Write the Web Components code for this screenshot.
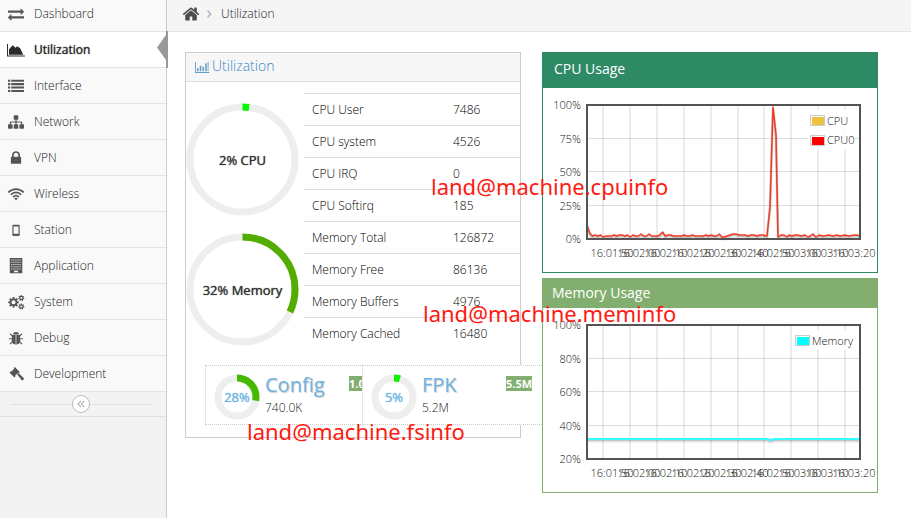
<!DOCTYPE html>
<html lang="en">
<head>
<meta charset="utf-8">
<title>Utilization</title>
<style>
  body { margin: 0; font: 300 12px/20px "Open Sans", "Noto Sans", sans-serif; color: #000; background: #fff; }
</style>
</head>
<body>
<router-console></router-console>

<script>
const define = (name, html) => {
  const template = document.createElement('template');
  customElements.define(name, class extends HTMLElement {
    connectedCallback() {
      if (this.shadowRoot) return;
      template.innerHTML = typeof html === 'function' ? html(this) : html;
      this.attachShadow({ mode: 'open' }).append(template.content.cloneNode(true));
    }
  });
};

const tooth = (cx, cy, r, w, h, n) => Array.from({ length: n }, (_, i) =>
  `<rect x="${cx - w / 2}" y="${cy - r - h}" width="${w}" height="${h + 60}" transform="rotate(${i * 360 / n} ${cx} ${cy})"/>`).join('');
const cog = (cx, cy, r, hole, n) =>
  `<circle cx="${cx}" cy="${cy}" r="${(r + hole) / 2}" fill="none" stroke="currentColor" stroke-width="${r - hole}"/>${tooth(cx, cy, r, r * .52, r * .36, n)}`;

const ICONS = {
  exchange: '<path d="M1792 1184v192q0 13-9.5 22.5t-22.5 9.5h-1376v192q0 13-9.5 22.5t-22.5 9.5q-12 0-24-10l-319-320q-9-9-9-22 0-14 9-23l320-320q9-9 23-9 13 0 22.5 9.5t9.5 22.5v192h1376q13 0 22.5 9.5t9.5 22.5zm0-544q0 14-9 23l-320 320q-9 9-23 9-13 0-22.5-9.5t-9.5-22.5v-192h-1376q-13 0-22.5-9.5t-9.5-22.5v-192q0-13 9.5-22.5t22.5-9.5h1376v-192q0-14 9-23t23-9q12 0 24 10l319 319q9 9 9 23z"/>',
  area: '<path d="M-110 220h110v1300h1900v110H-110z"/><path d="M110 1430V850l400-480 330 280 180-170 340 210 350 740z"/>',
  list: [190, 570, 950, 1330].map(y => `<path d="M0 ${y}h250v230H0zM360 ${y}h1432v230H360z"/>`).join(''),
  sitemap: '<path d="M1792 1248v320q0 40-28 68t-68 28h-320q-40 0-68-28t-28-68v-320q0-40 28-68t68-28h96v-192h-512v192h96q40 0 68 28t28 68v320q0 40-28 68t-68 28h-320q-40 0-68-28t-28-68v-320q0-40 28-68t68-28h96v-192h-512v192h96q40 0 68 28t28 68v320q0 40-28 68t-68 28h-320q-40 0-68-28t-28-68v-320q0-40 28-68t68-28h96v-192q0-52 38-90t90-38h512v-192h-96q-40 0-68-28t-28-68v-320q0-40 28-68t68-28h320q40 0 68 28t28 68v320q0 40-28 68t-68 28h-96v192h512q52 0 90 38t38 90v192h96q40 0 68 28t28 68z"/>',
  lock: '<path d="M640 768h512v-192q0-106-75-181t-181-75-181 75-75 181v192zm832 96v576q0 40-28 68t-68 28h-960q-40 0-68-28t-28-68v-576q0-40 28-68t68-28h32v-192q0-184 132-316t316-132 316 132 132 316v192h32q40 0 68 28t28 68z"/>',
  wifi: '<g fill="none" stroke="currentColor" stroke-width="190"><path d="M40 720Q400 350 896 350t856 370"/><path d="M310 980Q570 720 896 720t586 260"/><path d="M570 1240Q720 1080 896 1080t326 160"/></g><path d="M896 1600l-200-200q90-80 200-80t200 80z"/>',
  mobile: '<path fill-rule="evenodd" d="M610 300h580q120 0 120 120v1030q0 120-120 120H610q-120 0-120-120V420q0-120 120-120zm10 190v830h560V490z"/>',
  building: '<path fill-rule="evenodd" d="M200 0h1400v1720H200zM' + [170, 420, 670, 920, 1170].map(y => [370, 600, 830, 1060, 1290].map(x => `${x} ${y}h120v120h-120z`).join('M')).join('M') + 'M670 1440h460v150h-460z"/>',
  cogs: cog(620, 930, 430, 230, 8) + cog(1490, 450, 250, 120, 7) + cog(1490, 1400, 250, 120, 7),
  bug: '<path d="M560 500q0-290 336-290t336 290z"/><path d="M430 570h430v1050Q430 1600 430 1200zM932 570h430v630q0 400-430 420z"/><path fill="none" stroke="currentColor" stroke-width="120" d="M470 650L240 420M430 980H120M480 1300l-250 270M1322 650l230-230M1362 980h310M1312 1300l250 270"/>',
  gavel: '<path d="M760 120l560 560-110 110-70-40-350 350 40 70-110 110L160 720l110-110 70 40 350-350-40-70z"/><path d="M1010 930l160-140 580 560q70 80 0 160l-70 70q-80 60-160 0z"/>',
  home: '<path d="M1472 992v480q0 26-19 45t-45 19h-384v-384h-256v384h-384q-26 0-45-19t-19-45v-480q0-1 .5-3t.5-3l575-474 575 474q1 2 1 6zm223-69l-62 74q-8 9-21 11h-3q-13 0-21-7l-692-577-692 577q-12 8-24 7-13-2-21-11l-62-74q-8-10-7-23.5t11-21.5l719-599q32-26 76-26t76 26l244 204v-195q0-14 9-23t23-9h192q14 0 23 9t9 23v408l219 182q10 8 11 21.5t-7 23.5z"/>',
  bars: '<path d="M0 240h120v1290h1700v120H0zM260 1010h200v420H260zM610 720h200v710H610zM960 860h200v570H960zM1310 400h200v1030h-200z"/><path d="M1620 240h110v1190h-110z"/>',
  left: '<path fill="none" stroke="currentColor" stroke-width="190" d="M900 350L370 896l530 546M1480 350L950 896l530 546"/>',
  right: '<path fill="none" stroke="currentColor" stroke-width="330" d="M560 130l700 766-700 766"/>'
};

define('ui-icon', el => `
  <style>
    :host { display: inline-flex; flex: none; width: 16px; height: 16px; }
    svg { width: 100%; height: 100%; overflow: visible; fill: currentColor; }
  </style>
  <svg viewBox="0 0 1792 1792" aria-hidden="true">${ICONS[el.getAttribute('name')]}</svg>`);

define('nav-item', el => `
  <style>
    :host { display: block; position: relative; border-bottom: 1px solid #e5e5e5; background: #f9f9f9; color: #222; }
    a { display: flex; align-items: center; gap: 10px; height: 35px; padding-left: 8px; color: inherit; text-decoration: none; }
    ui-icon { margin-top: 1px; color: #555; }
    :host([first]) a { height: 31px; box-sizing: border-box; padding-bottom: 4px; }
    :host([active]) { background: #fff; color: #2b2b2b; }
    :host([active]) a { font-weight: 400; text-shadow: 0 0 1px; }
    :host([active]) ui-icon { color: #2b2b2b; }
    .mark { position: absolute; right: -2px; top: -1px; width: 11px; height: 37px; fill: #999; }
  </style>
  <a href="#${el.textContent.trim().toLowerCase()}"><ui-icon name="${el.getAttribute('icon')}"></ui-icon><span><slot></slot></span></a>
  ${el.hasAttribute('active') ? '<svg class="mark" viewBox="0 0 11 37"><path d="M9 0h2v37H9V29L0 16.500 9 4z"/></svg>' : ''}`);

define('side-bar', `
  <style>
    :host { display: block; flex: 0 0 166px; border-right: 1px solid #ccc; background: #f2f2f2; }
    .fold { display: flex; align-items: center; height: 24px; padding: 0 14px 0 10px; border-bottom: 1px solid #e0e0e0; background: #f3f3f3; }
    .fold::before, .fold::after { content: ""; flex: 1; height: 1px; background: #e0e0e0; }
    button { display: grid; place-items: center; width: 18px; height: 18px; padding: 0; border: 1px solid #bbb; border-radius: 50%; background: #fff; color: #aaa; }
    ui-icon { width: 10px; height: 10px; }
  </style>
  <nav><slot></slot></nav>
  <div class="fold"><button aria-label="Collapse menu"><ui-icon name="left"></ui-icon></button></div>`);

define('page-crumbs', `
  <style>
    :host { display: flex; align-items: center; height: 32px; box-sizing: border-box; padding: 0 15px 4px; border-bottom: 1px solid #e5e5e5; background: #f5f5f5; color: #222; }
    a { display: flex; color: #4c4c4c; }
    a ui-icon { width: 18px; height: 18px; }
    .sep { width: 8px; height: 8px; margin: 0 8px 0 5px; color: #b2b6bf; }
  </style>
  <a href="#home" aria-label="Home"><ui-icon name="home"></ui-icon></a>
  <ui-icon class="sep" name="right"></ui-icon><span><slot></slot></span>`);

/* Ring gauge with its caption in the middle. */
define('dial-gauge', el => {
  const size = +el.getAttribute('size'), v = +el.getAttribute('value'), r = size / 2 - 4;
  const len = 2 * Math.PI * r;
  return `
  <style>
    :host { display: grid; place-items: center; flex: none; width: ${size}px; height: ${size}px; font-size: 13px; font-weight: 400; text-shadow: 0 0 1px; }
    svg, span { grid-area: 1 / 1; }
    svg { width: 100%; height: 100%; }
    circle { fill: none; stroke-width: 7; }
  </style>
  <svg viewBox="0 0 ${size} ${size}" aria-hidden="true">
    <circle cx="${size / 2}" cy="${size / 2}" r="${r}" stroke="#eee"/>
    <circle cx="${size / 2}" cy="${size / 2}" r="${r}" stroke="${el.getAttribute('color')}" stroke-dasharray="${len * v / 100} ${len}" transform="rotate(-90 ${size / 2} ${size / 2})"/>
  </svg><span><slot></slot></span>`;
});

define('fs-card', el => `
  <style>
    :host { display: block; flex: 1; min-width: 0; overflow: var(--clip, visible); }
    .card { position: relative; display: flex; gap: 5px; width: 179px; height: 58px; border: 1px dotted #ccc; border-right: 0; background: #fff; }
    dial-gauge { margin: 8px 0 0 8px; color: #6fb3e0; }
    .name { padding-top: 7px; font-size: 20px; font-weight: 400; line-height: 24px; color: #6fb3e0; text-shadow: 1px 1px 1px #ccc; }
    .size { font-size: 12px; line-height: 22px; color: #222; }
    .badge { position: absolute; left: 143px; top: 10px; width: 26px; height: 15px; background: #82af6f; color: #fff; font-size: 11px; font-weight: 700; line-height: 15px; text-align: center; white-space: nowrap; }
  </style>
  <div class="card">
    <dial-gauge size="46" value="${el.getAttribute('value')}" color="${el.getAttribute('color')}">${el.getAttribute('value')}%</dial-gauge>
    <div><div class="name"><slot></slot></div><div class="size">${el.getAttribute('used')}</div></div>
    <span class="badge">${el.getAttribute('total')}</span>
  </div>`);

const STATS = [['CPU User', 7486], ['CPU system', 4526], ['CPU IRQ', 0], ['CPU Softirq', 185],
  ['Memory Total', 126872], ['Memory Free', 86136], ['Memory Buffers', 4976], ['Memory Cached', 16480]];

define('stats-widget', `
  <style>
    :host { display: block; min-width: 0; border: 1px solid #ccc; background: #fff; }
    h5 { display: flex; align-items: center; gap: 3px; height: 28px; margin: 0; padding-left: 9px; border-bottom: 1px solid #ddd; background: #f7f7f7; color: #3a87c4; font-size: 14px; font-weight: 300; }
    h5 ui-icon { width: 14px; height: 14px; color: #669fc7; }
    h5 span { padding-bottom: 2px; }
    .top { display: flex; justify-content: space-between; padding-top: 11px; }
    .dials { display: grid; gap: 17px; align-content: start; padding-top: 10px; color: #333; }
    table { width: 216px; border-collapse: collapse; }
    th, td { height: 30px; padding: 1px 0 0 8px; border-top: 1px solid #ddd; text-align: left; font-weight: 300; }
    th { width: 133px; }
    .fs { display: flex; padding: 16px 1px 12px 19px; }
    .first { --clip: hidden; }
  </style>
  <h5><ui-icon name="bars"></ui-icon><span>Utilization</span></h5>
  <div class="top">
    <div class="dials">
      <dial-gauge size="113" value="2" color="#05fa00">2% CPU</dial-gauge>
      <dial-gauge size="113" value="32" color="#52ad00">32% Memory</dial-gauge>
    </div>
    <table>${STATS.map(([k, v]) => `<tr><th scope="row">${k}</th><td>${v}</td></tr>`).join('')}</table>
  </div>
  <div class="fs">
    <fs-card class="first" value="28" color="#47b800" used="740.0K" total="1.0M">Config</fs-card>
    <fs-card value="5" color="#0df200" used="5.2M" total="5.5M">FPK</fs-card>
  </div>`);

define('usage-panel', `
  <style>
    :host { display: block; border: 1px solid var(--tone); background: #fff; position: relative; }
    h5 { margin: 0; padding: var(--pad); background: var(--tone); color: #fff; font-size: 14px; font-weight: 400; line-height: 20px; }
  </style>
  <h5><slot name="title"></slot></h5><slot></slot>`);

/* Samples are plot heights, one every 2.7 units, over a plot that spans 44..317 by 17..151. */
const idle = '137 145 148 147 148 147 149 148 148 148 147 148 147 147 148 147 149 147 148 148 146 148 148 146 148 148 148 147 144 148 147 147 148 148 148 148 147 148 148 147 148 148 148 148 147 148 147 148 148 146 149 147 148 147 148 147 147 149 148 146 149 147 148 147 147 147 148'.split(' ').map(Number);
const spike = [[181, 149], [184, 148], [187, 147], [190, 146], [193, 146], [196, 147], [202, 147], [205, 148], [208, 147], [211, 147], [214, 148], [217, 147], [220, 147], [224, 148], [227, 119], [230, 19], [233, 47], [235, 149], [238, 147], [241, 147], [244, 149], [246, 147], [249, 148], [252, 147], [255, 147], [258, 148], [262, 147], [265, 149], [267, 148], [270, 146], [273, 149], [276, 147], [280, 148], [286, 147], [290, 148], [294, 147], [297, 148], [302, 147], [306, 148], [311, 147], [314, 147], [317, 148]];
const cpu = idle.map((y, i) => [44 + i * 2.7, y]).filter(p => p[0] < 180).concat(spike);
const mem = [[44, 131], [224, 131], [227, 132], [232, 131], [317, 131]];
const CHARTS = {
  cpu: { y: [0, 25, 50, 75, 100], data: cpu, color: '#f43a24', legend: [['CPU', '#edc240'], ['CPU0', '#f00']], lx: 268 },
  memory: { y: [20, 40, 60, 80, 100], data: mem, color: '#3ff', legend: [['Memory', '#0ff']], lx: 253 }
};
const TIMES = ['16:01:50', '16:02:00', '16:02:10', '16:02:20', '16:02:30', '16:02:40', '16:02:50', '16:03:00', '16:03:10', '16:03:20'];

define('time-chart', el => {
  const c = CHARTS[el.getAttribute('kind')];
  const line = c.data.map(p => p.join(' ')).join('L');
  return `
  <style>
    :host { display: block; }
    svg { display: block; width: 100%; height: auto; font-size: 11px; fill: #111; }
    .grid { stroke: #545454; fill: none; }
    .line { fill: none; stroke-linejoin: round; }
  </style>
  <svg viewBox="0 0 334 184" role="img" aria-label="Usage over time">
    <path class="grid" stroke-width="2" stroke-opacity=".11" d="${TIMES.map((_, i) => `M${Math.round(60 + i * 26.9)} 17v134`).join('')}"/>
    <path class="grid" stroke-width="1" stroke-opacity=".2" d="M44 50.500h273M44 83.500h273M44 117.500h273"/>
    <path class="line" stroke="#000" stroke-opacity=".1" stroke-width="3" transform="translate(0 2)" d="M${line}"/>
    <path class="line" stroke="#000" stroke-opacity=".15" stroke-width="2" transform="translate(0 1)" d="M${line}"/>
    <path class="line" stroke="${c.color}" stroke-width="${c.lx === 268 ? 1.500 : 2}" d="M${line}"/>
    <rect x="44" y="17" width="273" height="134" fill="none" stroke="#545454" stroke-width="2"/>
    <rect x="${c.lx - 3}" y="22" width="${315 - c.lx}" height="${c.legend.length * 20}" fill="#fff" fill-opacity=".85"/>
    ${c.legend.map(([name, fill], i) => `
      <rect x="${c.lx - .5}" y="${27.5 + i * 20}" width="14" height="10" fill="#fff" stroke="#ccc"/>
      <rect x="${c.lx + 1}" y="${29 + i * 20}" width="12" height="8" fill="${fill}"/>
      <text x="${c.lx + 16}" y="${37 + i * 19}">${name}</text>`).join('')}
    ${c.y.map((v, i) => `<text x="38" y="${Math.round(155 - i * 33.4)}" text-anchor="end">${v}%</text>`).join('')}
    ${TIMES.map((t, i) => `<text x="${Math.round(69 + i * 26.9)}" y="169" text-anchor="middle">${t}</text>`).join('')}
  </svg>`;
});

/* Free-floating annotation pinned over the page. */
define('pin-note', el => `
  <style>
    :host { position: absolute; left: ${el.getAttribute('x')}px; top: ${el.getAttribute('y')}px; font: 400 22px/28px "Noto Sans", sans-serif; color: #ff1a10; white-space: nowrap; pointer-events: none; }
  </style><slot></slot>`);

define('router-console', `
  <style>
    :host { display: flex; position: relative; min-height: 100vh; }
    main { flex: 1; min-width: 0; }
    .content { display: grid; grid-template-columns: minmax(0, 1fr) minmax(0, 1fr); gap: 21px; align-items: start; padding: 20px 33px 25px 18px; }
    .charts { display: grid; gap: 5px; }
    .cpu { --tone: #2e8965; --pad: 6px 11px 9px; }
    .mem { --tone: #82af6f; --pad: 4px 9px 5px; }
  </style>
  <side-bar>
    <nav-item icon="exchange" first>Dashboard</nav-item>
    <nav-item icon="area" active>Utilization</nav-item>
    <nav-item icon="list">Interface</nav-item>
    <nav-item icon="sitemap">Network</nav-item>
    <nav-item icon="lock">VPN</nav-item>
    <nav-item icon="wifi">Wireless</nav-item>
    <nav-item icon="mobile">Station</nav-item>
    <nav-item icon="building">Application</nav-item>
    <nav-item icon="cogs">System</nav-item>
    <nav-item icon="bug">Debug</nav-item>
    <nav-item icon="gavel">Development</nav-item>
  </side-bar>
  <main>
    <page-crumbs>Utilization</page-crumbs>
    <div class="content">
      <stats-widget></stats-widget>
      <div class="charts">
        <usage-panel class="cpu"><span slot="title">CPU Usage</span><time-chart kind="cpu"></time-chart></usage-panel>
        <usage-panel class="mem"><span slot="title">Memory Usage</span><time-chart kind="memory"></time-chart></usage-panel>
      </div>
    </div>
  </main>
  <pin-note x="431" y="172">land@machine.cpuinfo</pin-note>
  <pin-note x="423" y="299">land@machine.meminfo</pin-note>
  <pin-note x="247" y="417">land@machine.fsinfo</pin-note>`);
</script>
</body>
</html>
